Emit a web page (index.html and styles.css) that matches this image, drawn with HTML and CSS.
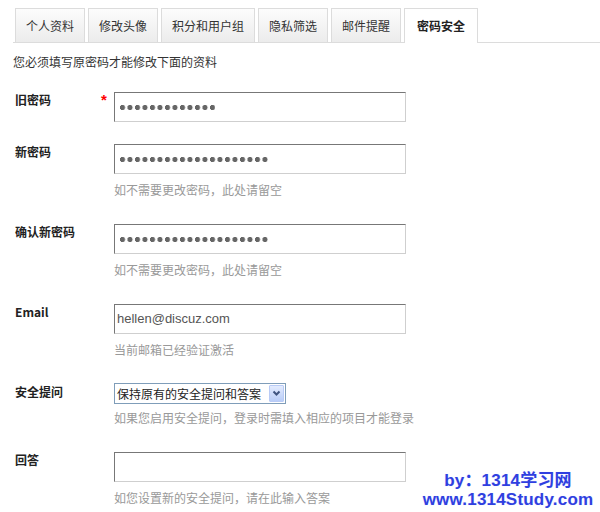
FILE: index.html
```html
<!DOCTYPE html>
<html lang="zh-CN">
<head>
<meta charset="utf-8">
<title>密码安全</title>
<link rel="stylesheet" href="styles.css">
</head>
<body>
<div class="page">
  <ul class="tabs">
    <li class="tab">个人资料</li>
    <li class="tab">修改头像</li>
    <li class="tab">积分和用户组</li>
    <li class="tab">隐私筛选</li>
    <li class="tab">邮件提醒</li>
    <li class="tab active">密码安全</li>
  </ul>
  <div class="form">
    <p class="intro">您必须填写原密码才能修改下面的资料</p>
    <div class="row">
      <div class="label">旧密码</div>
      <div class="req">*</div>
      <div class="cell">
        <div class="field"><span class="dots" style="width:95px"></span></div>
      </div>
    </div>
    <div class="row">
      <div class="label">新密码</div>
      <div class="req"></div>
      <div class="cell">
        <div class="field"><span class="dots" style="width:147.5px"></span></div>
        <div class="hint">如不需要更改密码，此处请留空</div>
      </div>
    </div>
    <div class="row">
      <div class="label">确认新密码</div>
      <div class="req"></div>
      <div class="cell">
        <div class="field"><span class="dots" style="width:147.5px"></span></div>
        <div class="hint">如不需要更改密码，此处请留空</div>
      </div>
    </div>
    <div class="row">
      <div class="label">Email</div>
      <div class="req"></div>
      <div class="cell">
        <div class="field"><span class="value">hellen@discuz.com</span></div>
        <div class="hint">当前邮箱已经验证激活</div>
      </div>
    </div>
    <div class="row">
      <div class="label">安全提问</div>
      <div class="req"></div>
      <div class="cell">
        <div class="select">
          <span class="select-text">保持原有的安全提问和答案</span>
          <span class="select-btn"><svg width="9" height="7" viewBox="0 0 9 7"><polyline points="1.5,1.5 4.5,4.5 7.5,1.5" fill="none" stroke="#3f5480" stroke-width="2"/></svg></span>
        </div>
        <div class="hint hint-select">如果您启用安全提问，登录时需填入相应的项目才能登录</div>
      </div>
    </div>
    <div class="row">
      <div class="label">回答</div>
      <div class="req"></div>
      <div class="cell">
        <div class="field"></div>
        <div class="hint">如您设置新的安全提问，请在此输入答案</div>
      </div>
    </div>
  </div>
  <div class="watermark">
    <div class="wm-line">by：1314学习网</div>
    <div class="wm-line">www.1314Study.com</div>
  </div>
</div>
</body>
</html>
```
FILE: styles.css
```css
html, body {
  margin: 0;
  padding: 0;
  background: #fff;
}
body {
  font-family: "Noto Sans CJK SC", "DejaVu Sans", sans-serif;
  font-size: 12px;
  line-height: 16px;
  color: #333;
  overflow: hidden;
}
.page {
  position: relative;
  width: 600px;
  height: 512px;
  padding: 8px 0 0 13px;
  box-sizing: border-box;
}
.tabs {
  list-style: none;
  margin: 0;
  padding: 0 0 0 2px;
  display: flex;
  gap: 3px;
  border-bottom: 1px solid #dcdcdc;
  height: 34px;
  align-items: flex-start;
}
.tab {
  height: 33px;
  line-height: 33px;
  padding: 0 10px;
  border: 1px solid #dcdcdc;
  border-bottom: none;
  background: linear-gradient(#fcfcfc, #ececec);
  color: #333;
  white-space: nowrap;
}
.tab.active {
  height: 34px;
  padding: 0 12px;
  background: #fff;
  font-weight: bold;
  color: #222;
}
.form {
  display: flex;
  flex-direction: column;
  gap: 22px;
  margin-top: 11px;
}
.intro {
  margin: 0;
  color: #333;
}
.row {
  display: flex;
  align-items: flex-start;
}
.label {
  width: 86px;
  padding: 0 0 0 2px;
  box-sizing: border-box;
  font-weight: bold;
  color: #222;
}
.req {
  width: 15px;
  padding-left: 2px;
  box-sizing: border-box;
  color: #f00;
  font-size: 15px;
  line-height: 14px;
  font-weight: bold;
  font-family: "Liberation Sans", sans-serif;
  padding-top: 1px;
}
.cell {
  display: flex;
  flex-direction: column;
}
.field {
  width: 292px;
  height: 30px;
  box-sizing: border-box;
  border: 1px solid;
  border-color: #777 #cfcfcf #cfcfcf #777;
  display: flex;
  align-items: center;
  padding: 0 2px;
  background: #fff;
}
.dots {
  display: block;
  height: 5px;
  margin-left: 3px;
  background: radial-gradient(circle at 2.5px 2.5px, #666 2.3px, transparent 2.9px) 0 0 / 7.5px 5px repeat-x;
}
.value {
  font-family: "Liberation Sans", sans-serif;
  font-size: 13px;
  color: #555;
}
.hint {
  margin: 8px 0 4px;
  color: #999;
}
.hint-select {
  margin-top: 6px;
}
.select {
  width: 172px;
  height: 21px;
  margin-top: -1px;
  box-sizing: border-box;
  border: 1px solid #7f9db9;
  display: flex;
  align-items: stretch;
  justify-content: space-between;
  background: #fff;
}
.select-text {
  padding-left: 2px;
  line-height: 19px;
  color: #222;
  white-space: nowrap;
}
.select-btn {
  width: 15px;
  margin: 1px;
  box-sizing: border-box;
  border: 1px solid #b9cbf6;
  border-radius: 1px;
  background: linear-gradient(#e3ebfe, #b9cdf8);
  display: flex;
  align-items: center;
  justify-content: center;
}
.watermark {
  position: absolute;
  left: 416px;
  top: 471px;
  width: 184px;
  font-family: "Liberation Sans", "Noto Sans CJK SC", sans-serif;
  font-weight: bold;
  font-size: 17px;
  color: #2f3fe0;
  text-shadow: 0 0 2px #fff, 0 0 1px #c8d0ff;
  letter-spacing: 0.2px;
}
.wm-line {
  height: 19px;
  line-height: 19px;
  text-align: center;
  white-space: nowrap;
}
```
